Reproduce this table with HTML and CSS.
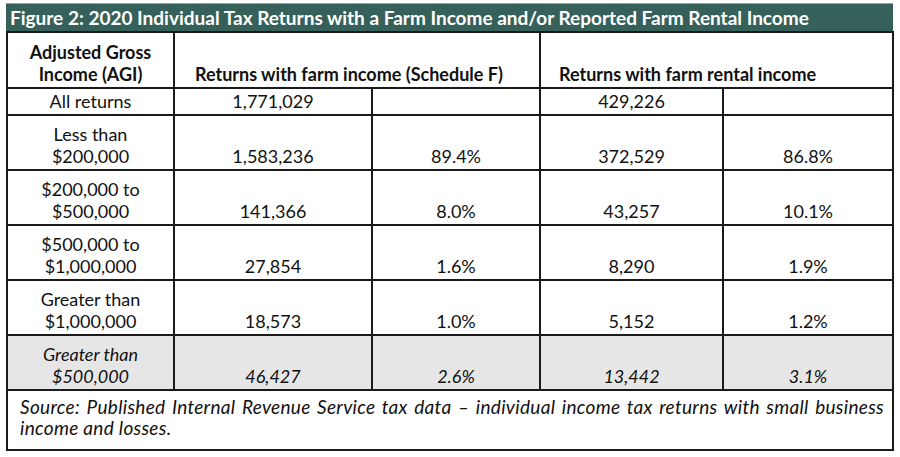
FILE: index.html
```html
<!DOCTYPE html>
<html lang="en">
<head>
<meta charset="utf-8">
<title>Figure 2</title>
<link rel="stylesheet" href="styles.css">
</head>
<body>
<div class="figure">
  <div class="title">Figure 2: 2020 Individual Tax Returns with a Farm Income and/or Reported Farm Rental Income</div>
  <table class="data">
    <colgroup>
      <col class="c1"><col class="c2"><col class="c3"><col class="c4"><col class="c5">
    </colgroup>
    <tr class="head">
      <th class="agi">Adjusted Gross<br>Income (AGI)</th>
      <th colspan="2" class="grp grp1">Returns with farm income (Schedule F)</th>
      <th colspan="2" class="grp grp2">Returns with farm rental income</th>
    </tr>
    <tr class="short">
      <td>All returns</td><td>1,771,029</td><td></td><td>429,226</td><td></td>
    </tr>
    <tr>
      <td>Less than<br>$200,000</td><td>1,583,236</td><td>89.4%</td><td>372,529</td><td>86.8%</td>
    </tr>
    <tr>
      <td>$200,000 to<br>$500,000</td><td>141,366</td><td>8.0%</td><td>43,257</td><td>10.1%</td>
    </tr>
    <tr>
      <td>$500,000 to<br>$1,000,000</td><td>27,854</td><td>1.6%</td><td>8,290</td><td>1.9%</td>
    </tr>
    <tr>
      <td>Greater than<br>$1,000,000</td><td>18,573</td><td>1.0%</td><td>5,152</td><td>1.2%</td>
    </tr>
    <tr class="sub">
      <td>Greater than<br>$500,000</td><td>46,427</td><td>2.6%</td><td>13,442</td><td>3.1%</td>
    </tr>
    <tr class="source">
      <td colspan="5">Source: Published Internal Revenue Service tax data – individual income tax returns with small business income and losses.</td>
    </tr>
  </table>
</div>
</body>
</html>
```
FILE: styles.css
```css
html, body {
  margin: 0;
  padding: 0;
  background: #ffffff;
}
body {
  font-family: Lato, "Liberation Sans", sans-serif;
  color: #111;
}
.figure {
  margin: 3px 0 0 6px;
  width: 887px;
}
.title {
  background: #36615a;
  border-top: 1px solid #8fa9a2;
  color: #ffffff;
  font-weight: bold;
  font-size: 19px;
  height: 27px;
  line-height: 27px;
  padding-left: 4px;
  white-space: nowrap;
  overflow: hidden;
}
.data {
  width: 886px;
  border-collapse: collapse;
  table-layout: fixed;
  border: 2px solid #1a1a1a;
  border-top: none;
  font-size: 18px;
}
.c1 { width: 167px; }
.c2 { width: 198px; }
.c3 { width: 168px; }
.c4 { width: 183px; }
.c5 { width: 170px; }
.data th, .data td {
  border: 2px solid #1a1a1a;
  text-align: center;
  vertical-align: bottom;
  padding: 0 4px 2px;
  line-height: 22px;
  height: 51px;
}
.data .head th {
  height: 52px;
  font-weight: bold;
}
.data .head th.grp { text-align: left; }
.data .head th.grp1 { padding-left: 20px; }
.data .head th.grp2 { padding-left: 18px; }
.data tr.short td {
  height: 23px;
}
.data tr.sub td {
  background: #e7e6e6;
  font-style: italic;
}
.data tr.source td {
  height: 53px;
  font-size: 19px;
  letter-spacing: 0.3px;
  font-style: italic;
  text-align: justify;
  vertical-align: top;
  padding: 5px 8px 0 12px;
  line-height: 21px;
}
```
